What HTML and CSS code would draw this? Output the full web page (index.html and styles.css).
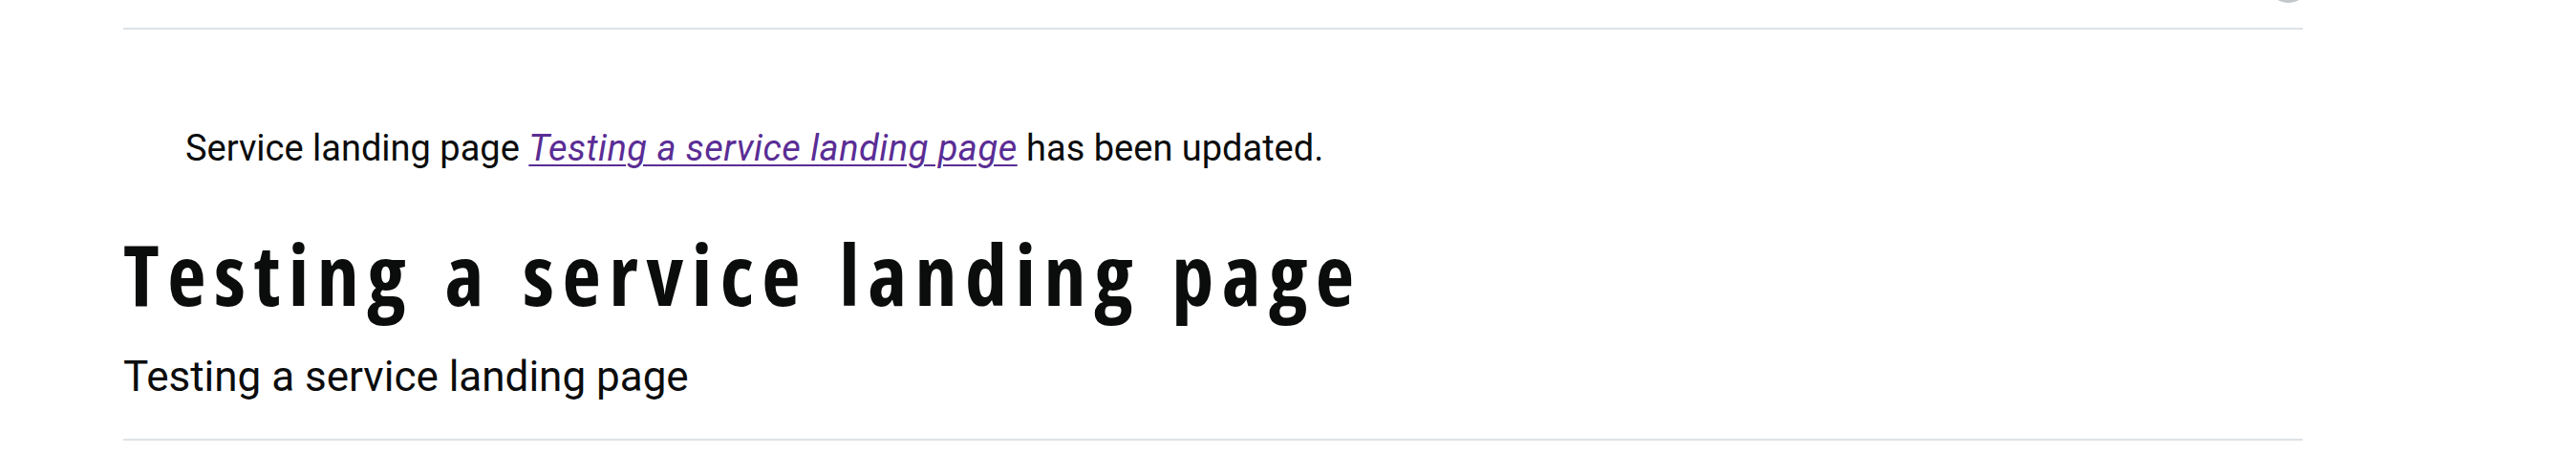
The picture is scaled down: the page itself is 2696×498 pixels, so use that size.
FILE: index.html
```html
<!DOCTYPE html>
<html lang="en">

<head>
    <meta charset="UTF-8">
    <meta name="viewport" content="width=device-width, initial-scale=1.0">
    <title>Testing a service landing page</title>
    <link rel="stylesheet" href="styles.css">
</head>

<body>
    <div class="page">
        <header class="topbar">
            <span class="avatar"></span>
        </header>

        <div class="messages">
            <p class="message">
                Service landing page
                <a href="#" class="message-link">Testing a service landing page</a>
                has been updated.
            </p>
        </div>

        <div class="page-header">
            <h1>Testing a service landing page</h1>
            <p class="lede">Testing a service landing page</p>
        </div>
    </div>
</body>

</html>
```

FILE: styles.css
```css
* {
    box-sizing: border-box;
    margin: 0;
    padding: 0;
}

body {
    font-family: Roboto, "Liberation Sans", sans-serif;
    background-color: #fff;
    color: #0b0c0c;
}

.page {
    width: 2281px;
    margin-left: 129px;
}

.topbar {
    display: flex;
    justify-content: flex-end;
    height: 31px;
    border-bottom: 2px solid #dee2e6;
}

.avatar {
    width: 44px;
    height: 44px;
    margin-top: -41px;
    margin-right: -7px;
    border-radius: 50%;
    background-color: #c4c7ca;
}

.messages {
    padding: 100px 0 0 65px;
}

.message {
    font-size: 38px;
    line-height: 48px;
}

.message-link {
    color: #5a2d95;
    font-style: italic;
    letter-spacing: 0.5px;
    text-decoration: underline;
    text-decoration-thickness: 2px;
    text-underline-offset: 4px;
}

.page-header {
    padding-top: 59px;
    padding-bottom: 37px;
    border-bottom: 2px solid #dee2e6;
}

.page-header h1 {
    font-family: "Open Sans", "DejaVu Sans", sans-serif;
    font-stretch: 75%;
    font-weight: bold;
    font-size: 88px;
    line-height: 96px;
    letter-spacing: 8.5px;
    word-spacing: 8px;
    color: #0b0c0c;
}

.lede {
    margin-top: 32px;
    font-size: 44px;
    line-height: 56px;
}
```
